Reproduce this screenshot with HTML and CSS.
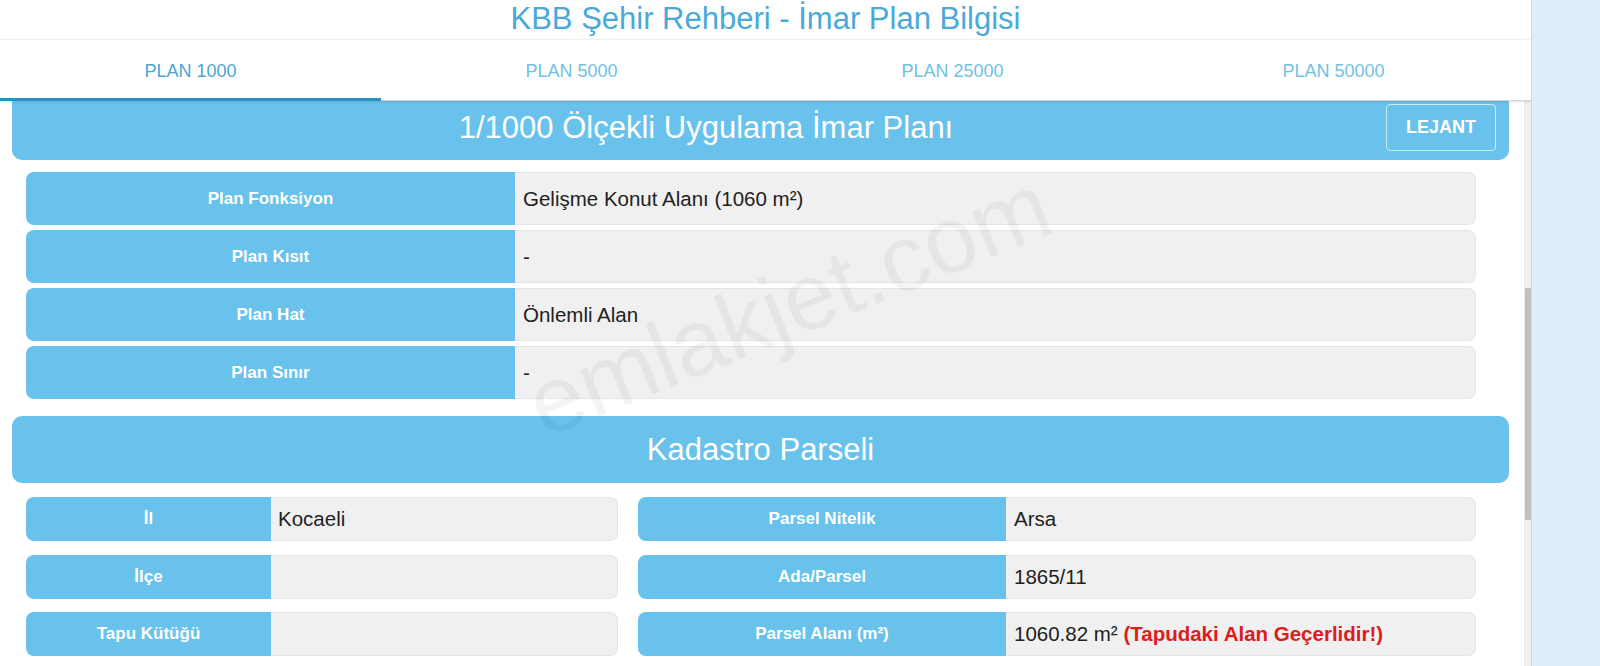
FILE: index.html
```html
<!DOCTYPE html>
<html lang="tr">
<head>
<meta charset="utf-8">
<title>KBB Şehir Rehberi - İmar Plan Bilgisi</title>
<link rel="stylesheet" href="styles.css">
</head>
<body>
<div class="app">
  <div class="panel">
    <h1 class="title">KBB Şehir Rehberi - İmar Plan Bilgisi</h1>
    <nav class="tabs">
      <a class="tab active">PLAN 1000</a>
      <a class="tab">PLAN 5000</a>
      <a class="tab">PLAN 25000</a>
      <a class="tab">PLAN 50000</a>
    </nav>
    <div class="viewport">
      <div class="scroller">
        <div class="content">
          <section class="block">
            <div class="head head-plan">
              <h2>1/1000 Ölçekli Uygulama İmar Planı</h2>
              <button class="legend">LEJANT</button>
            </div>
            <div class="plan-rows">
              <div class="row"><div class="label">Plan Fonksiyon</div><div class="value">Gelişme Konut Alanı (1060 m²)</div></div>
              <div class="row"><div class="label">Plan Kısıt</div><div class="value">-</div></div>
              <div class="row"><div class="label">Plan Hat</div><div class="value">Önlemli Alan</div></div>
              <div class="row"><div class="label">Plan Sınır</div><div class="value">-</div></div>
            </div>
          </section>
          <section class="block">
            <div class="head">
              <h2>Kadastro Parseli</h2>
            </div>
            <div class="parcel-grid">
              <div class="row row-l"><div class="label">İl</div><div class="value">Kocaeli</div></div>
              <div class="row row-r"><div class="label">Parsel Nitelik</div><div class="value">Arsa</div></div>
              <div class="row row-l"><div class="label">İlçe</div><div class="value"></div></div>
              <div class="row row-r"><div class="label">Ada/Parsel</div><div class="value">1865/11</div></div>
              <div class="row row-l"><div class="label">Tapu Kütüğü</div><div class="value"></div></div>
              <div class="row row-r"><div class="label">Parsel Alanı (m²)</div><div class="value">1060.82 m² <strong class="warn">(Tapudaki Alan Geçerlidir!)</strong></div></div>
            </div>
          </section>
        </div>
      </div>
      <div class="scrollbar"><div class="thumb"></div></div>
    </div>
    <div class="watermark">emlakjet.com</div>
  </div>
  <div class="side"></div>
</div>
</body>
</html>
```

FILE: styles.css
```css
* { box-sizing: border-box; }

html, body {
  margin: 0;
  height: 100%;
}

body {
  background: #ddf0fa;
  font-family: "Liberation Sans", Arial, sans-serif;
  color: #222;
  overflow: hidden;
}

.app {
  display: flex;
  height: 666px;
}

.panel {
  position: relative;
  width: 1532px;
  flex: none;
  background: #fff;
  border-right: 1px solid #cfd8dd;
  display: flex;
  flex-direction: column;
  overflow: hidden;
}

.side {
  flex: 1;
}

/* page title */
.title {
  margin: 0;
  height: 39px;
  line-height: 38px;
  font-size: 31px;
  font-weight: normal;
  color: #4aa9d8;
  text-align: center;
}

/* plan scale tabs */
.tabs {
  position: relative;
  z-index: 2;
  height: 62px;
  display: grid;
  grid-template-columns: repeat(4, 381px);
  border-top: 1px solid #f1f1f1;
  border-bottom: 1px solid #d4d4d4;
  box-shadow: 0 1px 2px rgba(0, 0, 0, 0.12);
  background: #fff;
}

.tab {
  position: relative;
  display: flex;
  align-items: center;
  justify-content: center;
  padding-top: 2px;
  font-size: 18px;
  color: #72c1e5;
  cursor: pointer;
}

.tab.active {
  color: #4ba5d3;
}

.tab.active::after {
  content: "";
  position: absolute;
  left: 0;
  right: 0;
  bottom: -1px;
  height: 3px;
  background: #2b8fc8;
}

/* scrolling area */
.viewport {
  flex: 1;
  display: flex;
  min-height: 0;
}

.scroller {
  width: 1524px;
  overflow: hidden;
}

.content {
  margin-top: -8px;
}

.scrollbar {
  width: 7px;
  background: #f1f1f1;
  border-left: 1px solid #e8e8e8;
}

.thumb {
  margin-top: 187px;
  height: 232px;
  background: #c1c1c1;
  border-radius: 1px;
}

/* section header bars */
.block {
  margin-bottom: 17px;
}

.head {
  display: flex;
  align-items: center;
  height: 67px;
  margin: 0 15px 0 12px;
  background: #68c2ec;
  border-radius: 10px;
}

.head h2 {
  flex: 1;
  margin: 0;
  font-size: 31px;
  font-weight: normal;
  color: #fff;
  text-align: center;
}

.head-plan {
  padding: 2px 13px 0 14px;
}

.legend {
  width: 110px;
  height: 47px;
  border: 1px solid #c9ecfb;
  border-radius: 4px;
  background: transparent;
  color: #fff;
  font-family: "Liberation Sans", Arial, sans-serif;
  font-weight: bold;
  font-size: 18px;
  cursor: pointer;
}

/* label / value rows */
.plan-rows {
  display: flex;
  flex-direction: column;
  gap: 5px;
  margin: 12px 48px 0 26px;
}

.row {
  display: flex;
  height: 53px;
  border-radius: 8px;
}

.label {
  display: flex;
  align-items: center;
  justify-content: center;
  width: 489px;
  flex: none;
  background: #68c2ec;
  border-radius: 8px 0 0 8px;
  color: #fff;
  font-weight: bold;
  font-size: 17px;
}

.value {
  flex: 1;
  display: flex;
  align-items: center;
  white-space: pre;
  padding-left: 8px;
  background: #f0f0f0;
  border: 1px solid #e4e4e4;
  border-left: none;
  border-radius: 0 8px 8px 0;
  font-size: 20.5px;
  color: #222;
}

.parcel-grid {
  display: grid;
  grid-template-columns: 592px 838px;
  column-gap: 20px;
  row-gap: 13.5px;
  margin: 14px 0 0 26px;
}

.parcel-grid .row {
  height: 44px;
}

.row-l .label { width: 245px; }
.row-r .label { width: 368px; }
.row-l .value { padding-left: 7px; }

.warn {
  color: #e01b1b;
  font-weight: bold;
}

/* site watermark laid over the page */
.watermark {
  position: absolute;
  left: 789px;
  top: 305px;
  transform: translate(-50%, -50%) rotate(-22deg);
  font-size: 94px;
  color: rgba(0, 0, 0, 0.045);
  white-space: nowrap;
  pointer-events: none;
  z-index: 3;
}
```
